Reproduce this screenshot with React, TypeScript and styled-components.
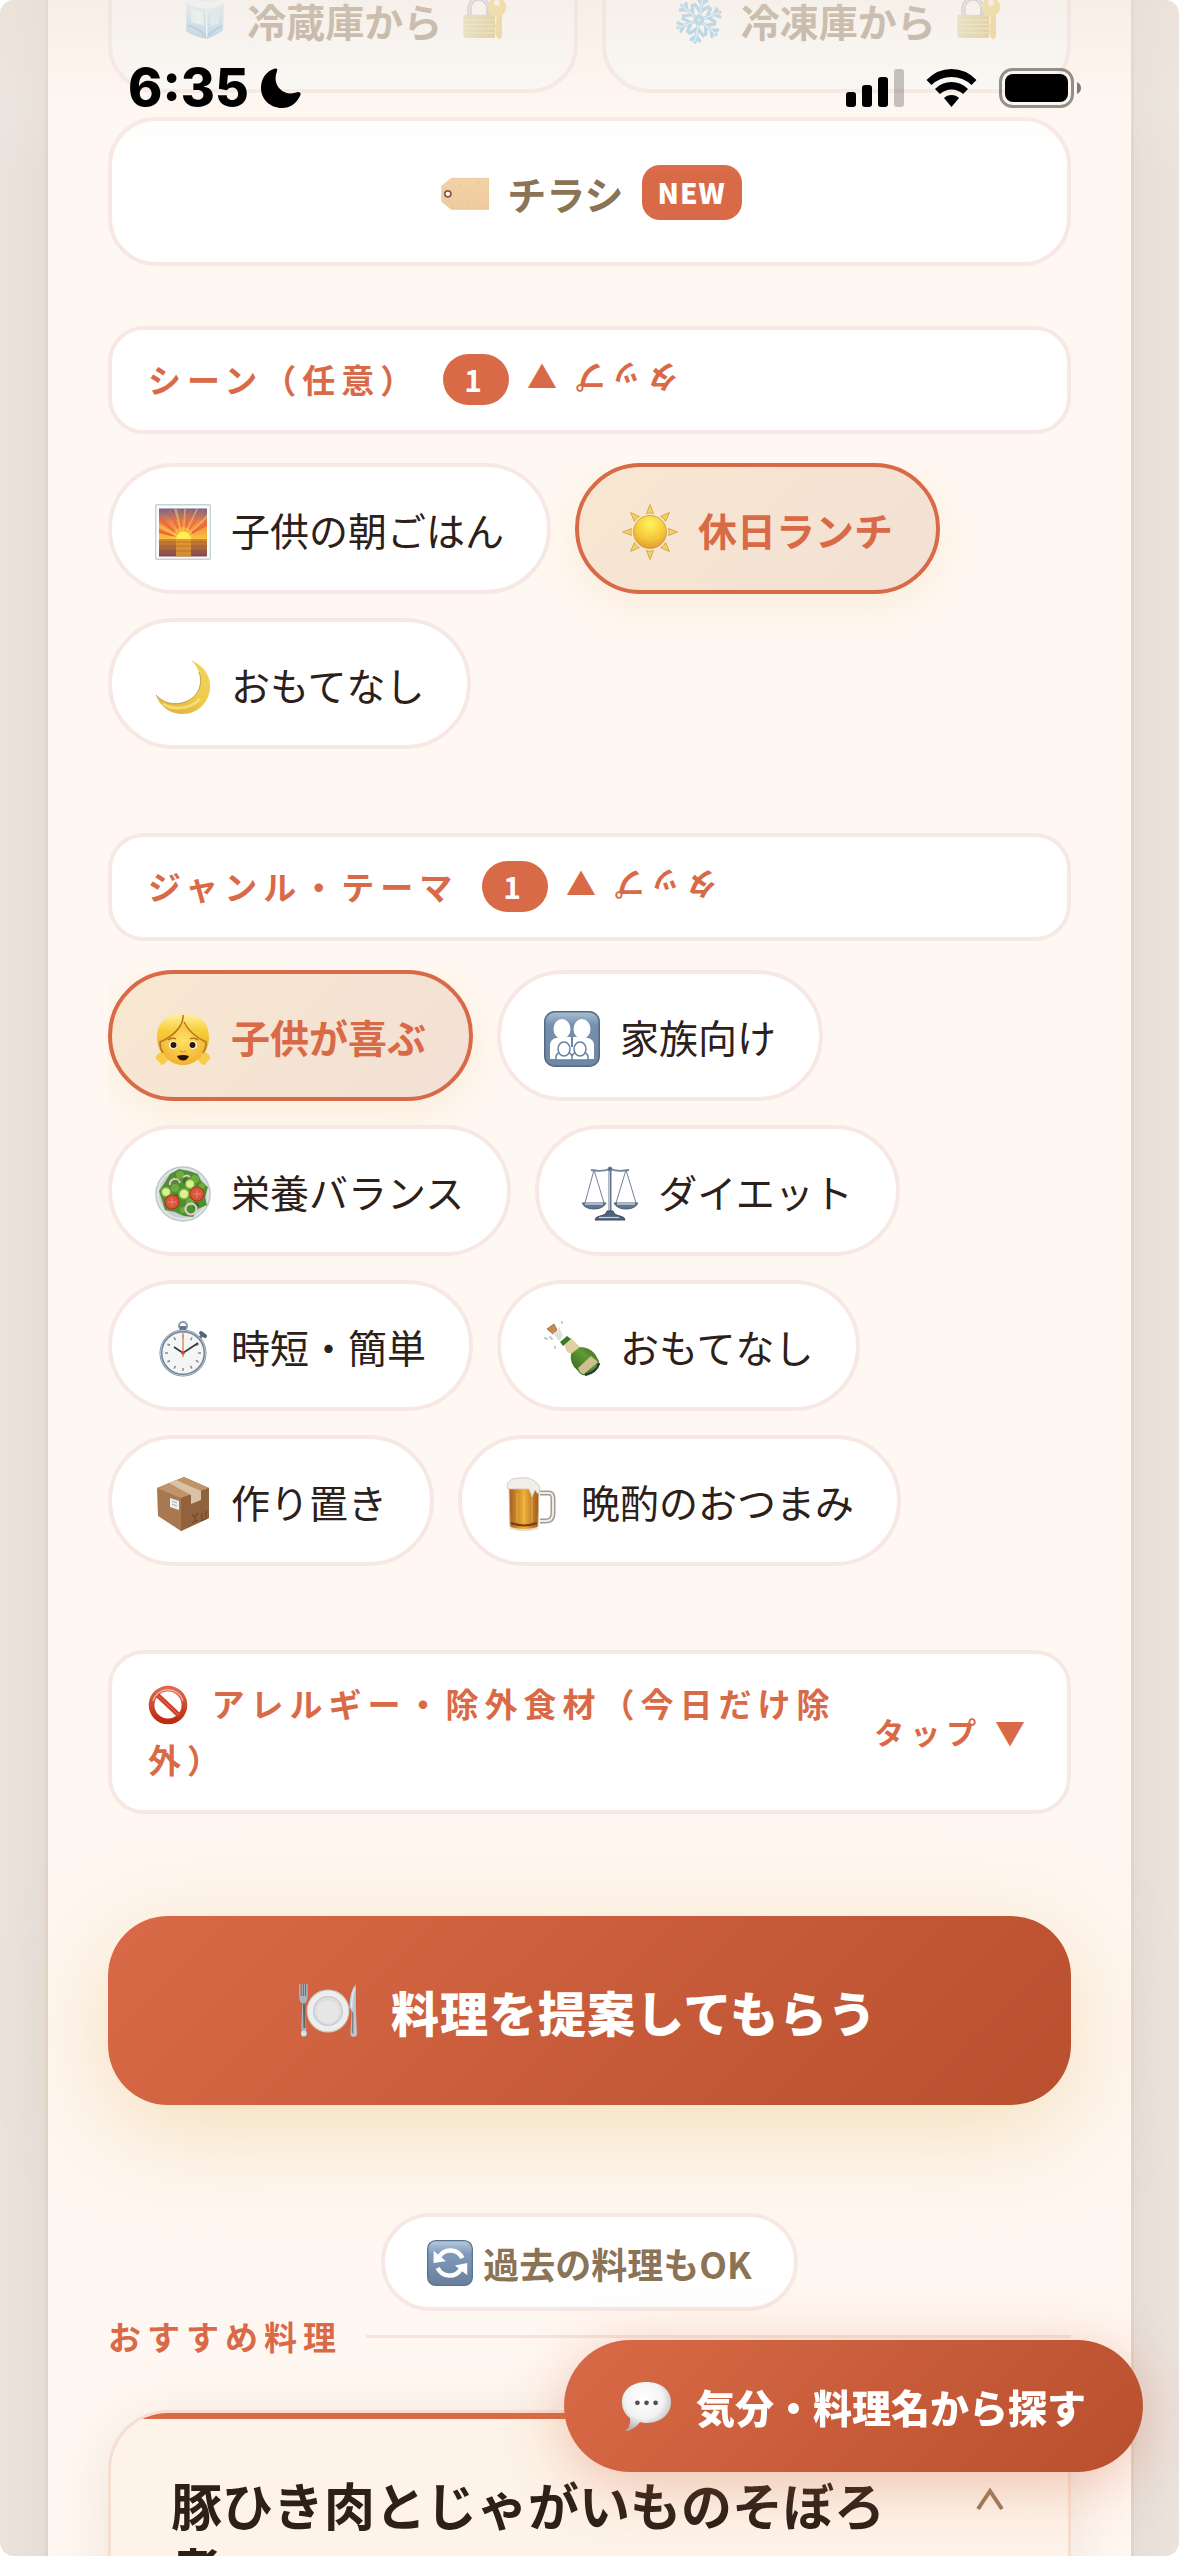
import React, { useState } from "react";
import styled, { createGlobalStyle, css } from "styled-components";

const color = {
  primary: "#d96a47",
  primaryDark: "#b84f2e",
  panel: "#fff7f1",
  line: "#f7e8e3",
  ink: "#2c2018",
  brown: "#8b7355",
};
const brand = `linear-gradient(135deg, ${color.primary} 0%, ${color.primaryDark} 100%)`;

const GlobalStyle = createGlobalStyle`
  *, *::before, *::after { box-sizing: border-box; }
  html { background: #fff; }
  body { margin: 0; font-family: "Noto Sans CJK JP", "Noto Sans", sans-serif; color: ${color.ink}; }
  button { font: inherit; color: inherit; margin: 0; padding: 0; border: 0; background: none; cursor: pointer; }
  h1, h2, h3 { margin: 0; }
`;

const Shell = styled.div`
  position: relative;
  height: 100vh;
  overflow: hidden;
  border-radius: 14px;
  background: #ebe3dd;
`;

const Panel = styled.main`
  min-height: 100%;
  margin: 0 45px;
  padding: 0 60px;
  border: solid #e4d3c7;
  border-width: 0 3px;
  background: ${color.panel};
  box-shadow: 0 0 48px rgba(139, 115, 85, 0.1);
`;

const SourceGrid = styled.div`
  display: grid;
  grid-template-columns: 1fr 1fr;
  gap: 24px;
  margin-top: -56px;
`;

const SourceCard = styled.button<{ $wide?: boolean; $locked?: boolean }>`
  display: flex;
  align-items: center;
  justify-content: center;
  gap: 18px;
  height: 149px;
  padding: 2px 0 0 4px;
  border: 4px solid ${color.line};
  border-radius: 48px;
  background: ${(p) => (p.$locked ? "#fbfaf7" : "#fff")};
  color: ${color.brown};
  font-size: 39px;
  font-weight: 700;
  ${(p) => p.$wide && css`grid-column: 1 / -1;`}
  ${(p) => p.$locked && css`
    & > * { opacity: 0.6; }
  `}
`;

const NewBadge = styled.span`
  height: 55px;
  padding: 0 16px;
  border-radius: 18px;
  background: ${color.primary};
  color: #fff;
  font-size: 28px;
  font-weight: 900;
  line-height: 55px;
  letter-spacing: 1px;
`;

const Section = styled.section<{ $gap: number }>`
  margin-top: ${(p) => p.$gap}px;
`;

const SectionHeader = styled.button`
  display: flex;
  align-items: center;
  width: 100%;
  padding: 21px 36px 23px;
  border: 4px solid ${color.line};
  border-radius: 36px;
  background: #fff;
  color: ${color.primary};
  font-size: 33px;
  font-weight: 700;
  line-height: 56px;
  letter-spacing: 6px;
  text-align: left;
`;

const Count = styled.span`
  flex: none;
  height: 51px;
  margin-left: 24px;
  padding: 0 21px;
  border-radius: 26px;
  background: ${color.primary};
  color: #fff;
  font-size: 30px;
  line-height: 51px;
`;

const Hint = styled.span<{ $open?: boolean }>`
  flex: none;
  margin-left: ${(p) => (p.$open ? "12px" : "auto")};
  font-size: 30px;
  line-height: 44px;
  white-space: nowrap;
  ${(p) => p.$open && css`transform: rotate(180deg);`}
`;

const HeaderText = styled.span`
  svg { vertical-align: -8px; margin-right: 10px; }
`;

const Chips = styled.div`
  display: flex;
  flex-wrap: wrap;
  gap: 24px;
  margin-top: 29px;
  overflow: hidden;
`;

const Chip = styled.button<{ $on: boolean }>`
  display: flex;
  align-items: center;
  gap: 20px;
  height: 131px;
  padding: 7px 43px 0;
  border: 4px solid ${(p) => (p.$on ? color.primary : color.line)};
  border-radius: 66px;
  background: ${(p) => (p.$on ? "linear-gradient(135deg, #f8e8d0, #f2e0d5)" : "#fff")};
  color: ${(p) => (p.$on ? color.primary : color.ink)};
  font-size: 39px;
  font-weight: ${(p) => (p.$on ? 700 : 400)};
  white-space: nowrap;
  ${(p) => p.$on && css`box-shadow: 0 12px 36px rgba(232, 200, 130, 0.2);`}
`;

const ChipLabel = styled.span`
  padding-bottom: 6px;
`;

const MainAction = styled.button`
  display: flex;
  align-items: center;
  justify-content: center;
  gap: 33px;
  width: 100%;
  height: 189px;
  margin-top: 102px;
  padding-right: 4px;
  border-radius: 60px;
  background: ${brand};
  box-shadow: 0 24px 96px rgba(232, 200, 130, 0.5);
  color: #fff;
  font-size: 48px;
  font-weight: 900;
  letter-spacing: 1px;
`;

const PastToggle = styled.button`
  display: flex;
  align-items: center;
  gap: 10px;
  height: 98px;
  margin: 108px auto 0;
  padding: 2px 42px 0;
  border: 4px solid ${color.line};
  border-radius: 49px;
  background: #fff;
  color: ${color.brown};
  font-size: 36px;
  font-weight: 700;
`;

const RecommendTitle = styled.h2`
  display: flex;
  align-items: center;
  gap: 24px;
  color: ${color.primary};
  font-size: 33px;
  font-weight: 700;
  line-height: 50px;
  letter-spacing: 6px;

  &::after {
    content: "";
    flex: 1;
    height: 3px;
    background: #f7e3d9;
  }
`;

const RecipeCard = styled.article`
  margin-top: 49px;
  overflow: hidden;
  border: 3px solid #f6dfd1;
  border-radius: 60px;
  background: #fdf3e8;
  box-shadow: 0 12px 60px rgba(139, 115, 85, 0.14);

  &::before {
    content: "";
    display: block;
    height: 6px;
    background: ${color.primary};
  }
`;

const RecipeHead = styled.div`
  display: flex;
  align-items: flex-start;
  gap: 30px;
  padding: 52px 45px 60px 60px;
`;

const RecipeName = styled.h3`
  flex: 1;
  font-size: 51px;
  font-weight: 700;
  line-height: 66px;
`;

const CollapseButton = styled.button`
  display: grid;
  place-items: center;
  width: 66px;
  height: 56px;
`;

const SearchFab = styled.button`
  position: fixed;
  right: 36px;
  bottom: 84px;
  display: flex;
  align-items: center;
  gap: 24px;
  height: 132px;
  padding: 0 57px;
  border-radius: 66px;
  background: ${brand};
  box-shadow: 0 12px 60px rgba(217, 106, 71, 0.36);
  color: #fff;
  font-size: 39px;
  font-weight: 900;
`;

const StatusBar = styled.header`
  position: absolute;
  inset: 0 0 auto;
  display: flex;
  align-items: center;
  height: 176px;
  padding: 0 98px 0 128px;
  background: linear-gradient(rgba(238, 226, 216, 0.42), rgba(250, 244, 238, 0.16) 60%, rgba(255, 255, 255, 0));
  color: #000;
  pointer-events: none;
`;

const Clock = styled.time`
  margin-right: 12px;
  font: 800 52px/60px Inter, "Liberation Sans", sans-serif;
`;

const StatusIcons = styled.div`
  display: flex;
  align-items: center;
  gap: 22px;
  margin-left: auto;
`;

const Picto = styled.svg`
  display: block;
  flex: none;
`;

const InlinePicto = styled.svg`
  display: inline-block;
`;

/* ---------- pictograms, all drawn on a 56 unit grid ---------- */

const art: Record<string, React.ReactNode> = {
  ice: (
    <>
      <defs>
        <linearGradient id="ice" x1="0" y1="0" x2="0" y2="1">
          <stop offset="0" stopColor="#d3edf5" /><stop offset="1" stopColor="#7fb6dc" />
        </linearGradient>
      </defs>
      <path d="M6 8Q28 1 50 8L49 40Q40 47 30 50Q16 48 6 41Z" fill="url(#ice)" />
      <path d="M7 8Q28 3 49 8Q42 15 30 15Q14 14 7 8Z" fill="#ecf9fc" />
      <path d="M12 15L26 18L27 34L12 31Z" fill="#d7f0f8" />
      <path d="M34 18L45 14L44 32L34 36Z" fill="#c2e2f2" />
      <path d="M8 34Q22 38 30 48Q38 39 48 35" fill="none" stroke="#5b9fd0" strokeWidth="2" />
      <path d="M30 15V48M20 17V32" stroke="#f4fdff" strokeWidth="1.5" />
    </>
  ),
  snow: (
    <g stroke="#6cb6e4" strokeWidth="4" strokeLinecap="round" fill="none">
      {[10, 70, 130, 190, 250, 310].map((a) => (
        <g key={a} transform={`rotate(${a} 28 28)`}>
          <path d="M28 28V2M28 18L20 11M28 18L36 11M28 9L23 4M28 9L33 4" />
          <path d="M28 28V3" stroke="#d9f2fb" strokeWidth="1.5" />
        </g>
      ))}
      <circle cx="28" cy="28" r="4" fill="#bfe4f6" />
    </g>
  ),
  lock: (
    <>
      <defs>
        <linearGradient id="lock" x1="0" y1="0" x2="1" y2="0">
          <stop offset="0" stopColor="#d8cc8c" /><stop offset="1" stopColor="#c7ab45" />
        </linearGradient>
      </defs>
      <path d="M11 26V15a11 12 0 0 1 22 0V26" fill="none" stroke="#a3abb2" strokeWidth="5" />
      <path d="M11 26V15a11 12 0 0 1 22 0" fill="none" stroke="#d9dee2" strokeWidth="1.5" />
      <rect x="4" y="22" width="37" height="27" rx="2" fill="url(#lock)" />
      <path d="M5 28H40M5 33H40M5 38H40M5 43H40" stroke="#eadfa5" strokeWidth="1" />
      <path d="M43 20H49V47L46 51L42 47V43H40V40H42V37H40V33H42Z" fill="#e5bd4b" />
      <circle cx="43" cy="13" r="11" fill="#ecc551" />
      <circle cx="43" cy="8" r="3.5" fill="#fbf6e8" />
    </>
  ),
  tag: (
    <>
      <defs>
        <linearGradient id="tag" x1="0" y1="0" x2="0" y2="1">
          <stop offset="0" stopColor="#f3d2a8" /><stop offset="1" stopColor="#eecb9c" />
        </linearGradient>
      </defs>
      <path d="M12 11H56V47H12L1 38V20Z" fill="url(#tag)" stroke="#ecc592" strokeWidth="1" />
      <circle cx="8" cy="29" r="3.6" fill="#fff" stroke="#8a5a44" strokeWidth="2" />
      <path d="M22 17v3M32 37v3M44 15v4M48 43v2M36 26v3" stroke="#e6bd8b" strokeWidth="1" />
    </>
  ),
  sunrise: (
    <>
      <defs>
        <linearGradient id="sky" x1="0" y1="0" x2="0" y2="1">
          <stop offset="0" stopColor="#6f6390" /><stop offset="0.45" stopColor="#ee8447" /><stop offset="1" stopColor="#fdc23d" />
        </linearGradient>
        <linearGradient id="rays" x1="0" y1="0" x2="0" y2="1">
          <stop offset="0" stopColor="#d9664a" stopOpacity="0.3" /><stop offset="1" stopColor="#ee5a2c" />
        </linearGradient>
        <linearGradient id="sea" x1="0" y1="0" x2="0" y2="1">
          <stop offset="0" stopColor="#d68a2c" /><stop offset="1" stopColor="#7f4650" />
        </linearGradient>
      </defs>
      <rect x="0.7" y="0.7" width="54.6" height="54.6" rx="1" fill="#fbfdfd" stroke="#c6d2d5" strokeWidth="1.4" />
      <rect x="4" y="4.5" width="48" height="31" fill="url(#sky)" />
      <path d="M28 35L4 10V17ZM28 35L11 4.5H16ZM28 35L23 4.5H26ZM28 35L33 4.5H38ZM28 35L46 4.5H51ZM28 35L52 16V22ZM28 35L4 25V29Z" fill="url(#rays)" />
      <path d="M28 35L19 5H22ZM28 35L29 5H31ZM28 35L41 5H43ZM28 35L52 11V14ZM28 35L4 20V23Z" fill="#ffc861" opacity="0.55" />
      <circle cx="28" cy="33" r="10" fill="#ffd04a" opacity="0.5" />
      <path d="M21 35a7.5 7.5 0 0 1 15 0Z" fill="#ffee4f" />
      <rect x="4" y="35" width="48" height="17.5" fill="url(#sea)" />
      <rect x="21" y="35" width="15" height="17.5" fill="#e9a22c" opacity="0.75" />
      <path d="M4 38H52M4 42H52M4 47H52" stroke="#8a4f38" strokeWidth="0.7" opacity="0.6" />
    </>
  ),
  sun: (
    <>
      <defs>
        <radialGradient id="sun" cx="0.5" cy="0.25" r="0.8">
          <stop offset="0" stopColor="#fff45e" /><stop offset="0.6" stopColor="#f3c638" /><stop offset="1" stopColor="#dc9430" />
        </radialGradient>
      </defs>
      {[0, 45, 90, 135, 180, 225, 270, 315].map((a) => (
        <path key={a} d="M28 0.5L31.5 9.5Q28 8 24.5 9.5Z" transform={`rotate(${a} 28 28)`} fill="#f3d45a" stroke="#cf9c45" strokeWidth="0.8" />
      ))}
      <circle cx="28" cy="28" r="16.5" fill="url(#sun)" stroke="#cf9438" strokeWidth="0.8" />
    </>
  ),
  moon: (
    <>
      <defs>
        <linearGradient id="moon" x1="0.8" y1="0" x2="0.4" y2="1">
          <stop offset="0" stopColor="#eed25c" /><stop offset="0.6" stopColor="#f0cb4c" /><stop offset="1" stopColor="#e3b541" />
        </linearGradient>
      </defs>
      <path d="M36 1C49 7 56 17 55 29C54 44 42 55 28 55C15 55 5 48 1 36C8 44 19 47 30 43C42 39 49 26 44 13C42 8 39 4 36 1Z" fill="url(#moon)" />
      <path d="M1 36C8 44 19 47 30 43C42 39 49 26 44 13" fill="none" stroke="#c2a04a" strokeWidth="1" />
      <path d="M8 45C18 51 34 51 45 40" fill="none" stroke="#fae98b" strokeWidth="3" opacity="0.7" />
    </>
  ),
  girl: (
    <>
      <defs>
        <radialGradient id="face" cx="0.5" cy="0.4" r="0.6">
          <stop offset="0" stopColor="#ffe264" /><stop offset="1" stopColor="#f2b02e" />
        </radialGradient>
        <linearGradient id="hair" x1="0" y1="0" x2="0" y2="1">
          <stop offset="0" stopColor="#fff0a0" /><stop offset="0.4" stopColor="#f8cf3d" /><stop offset="1" stopColor="#e9ac2a" />
        </linearGradient>
      </defs>
      <path d="M6 41Q0 44 1 48Q4 50 6 54Q12 53 14 46ZM50 41Q56 44 55 48Q52 50 50 54Q44 53 42 46Z" fill="#f8cb48" />
      <path d="M28 4C24 2 2 2 2 27Q2 36 7 42H49Q54 36 54 27C54 2 32 2 28 4Z" fill="url(#hair)" />
      <path d="M28 13C20 22 12 28 5 29C5 44 15 54 28 54C41 54 51 44 51 29C43 27 35 21 28 13Z" fill="url(#face)" />
      <path d="M28 4C29 13 20 25 5 31Q5 38 8 42M29 11C34 21 42 27 51 31Q51 38 48 42" fill="none" stroke="#b9791d" strokeWidth="1.6" />
      <ellipse cx="18" cy="34" rx="4" ry="3.8" fill="#fff" /><ellipse cx="38" cy="34" rx="4" ry="3.8" fill="#fff" />
      <circle cx="18.5" cy="34" r="3" fill="#2b1709" /><circle cx="37.500" cy="34" r="3" fill="#2b1709" />
      <path d="M13 29Q17 26 21 28M35 28Q39 26 43 29" fill="none" stroke="#a86b15" strokeWidth="1.2" />
      <path d="M22 45Q28 43 34 45Q32 49.500 28 49.500Q24 49.500 22 45Z" fill="#2d1305" />
      <path d="M25 40Q28 42 31 40" fill="none" stroke="#d7922a" strokeWidth="1.2" />
    </>
  ),
  family: (
    <>
      <defs>
        <linearGradient id="blue" x1="0" y1="0" x2="0" y2="1">
          <stop offset="0" stopColor="#a9bfd3" /><stop offset="0.25" stopColor="#7590ac" /><stop offset="1" stopColor="#6d87a4" />
        </linearGradient>
      </defs>
      <rect x="0.8" y="0.8" width="54.4" height="54.4" rx="10" fill="url(#blue)" stroke="#536b84" strokeWidth="1.6" />
      <path d="M6 48V33Q7 28 12 27L17 26H39L44 27Q49 28 50 33V48Z" fill="#fff" />
      <ellipse cx="18" cy="18" rx="8.5" ry="10" fill="#fff" /><ellipse cx="38" cy="18" rx="8.5" ry="10" fill="#fff" />
      <path d="M28 25V36" stroke="#6d87a4" strokeWidth="2" />
      <g fill="#fff" stroke="#6583a2" strokeWidth="1.5">
        <path d="M12 49V45Q13 42 17 41H23Q27 42 28 45V49ZM28 49V45Q29 42 33 41H39Q43 42 44 45V49Z" />
        <ellipse cx="20" cy="38" rx="6" ry="7" /><ellipse cx="36" cy="38" rx="6" ry="7" />
      </g>
    </>
  ),
  salad: (
    <>
      <circle cx="28" cy="28" r="27" fill="#dfe5e6" stroke="#bfc8ca" strokeWidth="1.5" />
      <circle cx="28" cy="28" r="24" fill="#c7ced0" />
      <path d="M15 8L24 3L34 5L43 8L46 15L53 21L50 31L52 39L43 43L38 51L29 50L20 46L10 44L7 34L4 25L9 18Z" fill="#4f8f31" />
      <g fill="#6dab3d">
        <circle cx="25" cy="9" r="4" /><circle cx="40" cy="13" r="4" /><circle cx="20" cy="22" r="4" /><circle cx="35" cy="36" r="4" /><circle cx="28" cy="44" r="3" /><circle cx="47" cy="20" r="3" />
      </g>
      <g fill="#3a7124">
        <circle cx="31" cy="15" r="3" /><circle cx="21" cy="30" r="2" /><circle cx="41" cy="39" r="3" /><circle cx="45" cy="25" r="2" />
      </g>
      <g fill="#dcf09a" stroke="#83b13e" strokeWidth="1.5">
        <circle cx="11" cy="26" r="4.5" /><circle cx="35" cy="18" r="4.5" /><circle cx="29" cy="28" r="5" />
      </g>
      <g fill="#d9553e" stroke="#b5371f" strokeWidth="1.2">
        <circle cx="17" cy="36" r="7" /><circle cx="42" cy="28" r="7" />
      </g>
      <path d="M17 32V40M13 36H21M42 24V32M38 28H46" stroke="#ea8a72" strokeWidth="1" />
      <path d="M15 19A5 5 0 0 1 25 17M28 11Q32 8 35 11" fill="none" stroke="#e9bfd4" strokeWidth="2" />
      <circle cx="36" cy="43" r="5.5" fill="none" stroke="#ead1d8" strokeWidth="2" />
    </>
  ),
  scale: (
    <g fill="none" stroke="#72839a">
      <path d="M9 4Q20 6 28 3Q36 6 47 4" strokeWidth="1.8" />
      <path d="M12 4L3 37M12 4L22 37M44 4L34 37M44 4L54 37" strokeWidth="1" />
      <path d="M28 2V47" stroke="#62748c" strokeWidth="3" />
      <path d="M27.5 4V46" stroke="#b9c6d4" strokeWidth="1" />
      <path d="M0 37H24Q21 43 12 43Q3 43 0 37ZM32 37H56Q53 43 44 43Q35 43 32 37Z" fill="#5f7590" stroke="#4d6078" />
      <path d="M3 38H21M35 38H53" stroke="#c6d2de" strokeWidth="1.5" />
      <path d="M25 45H31Q32 49 38 50Q43 51 43 54H13Q13 51 18 50Q24 49 25 45Z" fill="#52647a" stroke="#394a60" />
      <path d="M17 51.5H37" stroke="#c6d2de" strokeWidth="1.2" />
      <circle cx="28" cy="3" r="2" fill="#52647a" />
    </g>
  ),
  watch: (
    <>
      <circle cx="28" cy="5" r="4" fill="none" stroke="#8b9aab" strokeWidth="2" />
      <rect x="25" y="5" width="6" height="6" fill="#66778a" />
      <path d="M44 18L48 13" stroke="#66778a" strokeWidth="3" /><path d="M46 12L50 15" stroke="#52637a" strokeWidth="4" strokeLinecap="round" />
      <circle cx="28" cy="32" r="22" fill="#f4f5f5" stroke="#76869a" strokeWidth="3" />
      <circle cx="28" cy="32" r="22.5" fill="none" stroke="#b8c8dc" strokeWidth="1" />
      {[0, 30, 60, 90, 120, 150, 180, 210, 240, 270, 300, 330].map((a) => (
        <path key={a} d="M28 14V17" transform={`rotate(${a} 28 32)`} stroke="#878b8d" strokeWidth="1.5" />
      ))}
      <path d="M19 26L28 32L43 22" fill="none" stroke="#33373b" strokeWidth="1.6" />
      <path d="M28 12V36" stroke="#e68a64" strokeWidth="1.5" />
      <circle cx="28" cy="32" r="1.8" fill="#c34e2a" />
    </>
  ),
  champagne: (
    <>
      <defs>
        <linearGradient id="glass" x1="0" y1="1" x2="1" y2="0">
          <stop offset="0" stopColor="#2c5c1c" /><stop offset="0.6" stopColor="#5f9a35" /><stop offset="1" stopColor="#31601f" />
        </linearGradient>
      </defs>
      <path d="M3 8L10 3L13 9L9 13Z" fill="#c98a4f" stroke="#9c6434" strokeWidth="0.8" />
      <path d="M9 12L14 10L15 5L17 11L19 15L15 20L12 16Z" fill="#dfe2da" />
      <path d="M1 17L3 18M11 26L11 27M6 16L8 18M18 1L18 2" stroke="#c5cab8" strokeWidth="2" strokeLinecap="round" />
      <path d="M20 23L27 17L37 27L30 34L23 31Z" fill="#e0d0a2" />
      <path d="M16 21L23 15L27 18L19 25Z" fill="#3d7a25" />
      <path d="M27 33L36 26Q45 26 51 33L55 40Q55 50 42 54Q37 55 34 50Q25 42 27 33Z" fill="url(#glass)" />
      <path d="M34 47L47 35L54 41L40 53Q36 53 34 47Z" fill="#cfbf90" />
      <path d="M41 54Q53 51 55 42" stroke="#2c3f33" strokeWidth="2.5" fill="none" />
    </>
  ),
  box: (
    <>
      <path d="M2 12L29 1L54 12L54 42L26 55L3 40Z" fill="#a87850" />
      <path d="M2 12L29 1L54 12L26 22Z" fill="#c0946a" />
      <path d="M26 22L54 12V42L26 55Z" fill="#90623d" />
      <path d="M14 7L21 4L46 15V24L36 28V19Z" fill="#d9c2a6" />
      <path d="M15 22L24 25V34L15 31Z" fill="#eef0f1" />
      <path d="M17 25L22 27M17 28L22 30" stroke="#a2a7aa" strokeWidth="1" />
      <path d="M37 39Q41 42 43 37M40 41V46M37 47L43 44M47 37V43M51 35V41M46 45L52 42" fill="none" stroke="#6e4a2d" strokeWidth="1.3" />
    </>
  ),
  beer: (
    <>
      <defs>
        <linearGradient id="beer" x1="0" y1="0" x2="1" y2="0">
          <stop offset="0" stopColor="#a85c1c" /><stop offset="0.5" stopColor="#eeb03a" /><stop offset="1" stopColor="#a1561c" />
        </linearGradient>
      </defs>
      <path d="M35 17H44Q48 17 48 23V37Q48 45 41 45H35" fill="none" stroke="#a39c90" strokeWidth="5" />
      <path d="M35 17H44Q48 17 48 23V37Q48 45 41 45H35" fill="none" stroke="#eeece6" strokeWidth="2" />
      <path d="M4 11H34L33 50Q32 54 19 54Q6 54 5 50Z" fill="url(#beer)" stroke="#c9b99a" strokeWidth="1" />
      <path d="M12 17V46M19 20V46M27 18V46" stroke="#ffd75b" strokeWidth="1.5" opacity="0.35" />
      <path d="M6 47Q19 52 32 47" fill="none" stroke="#7b3c10" strokeWidth="2" />
      <path d="M5 52Q19 56 33 52" fill="none" stroke="#e8ddcb" strokeWidth="2" />
      <path d="M2 10Q3 2 14 2Q24 0 32 7Q37 12 33 18L30 14L27 21L24 13H4Q2 13 2 10Z" fill="#f1ede7" stroke="#cfc8bb" strokeWidth="0.8" />
    </>
  ),
  ban: (
    <>
      <defs>
        <linearGradient id="ban" x1="0" y1="0" x2="0" y2="1">
          <stop offset="0" stopColor="#dc6a50" /><stop offset="1" stopColor="#bd2a10" />
        </linearGradient>
      </defs>
      <circle cx="28" cy="28" r="23" fill="none" stroke="url(#ban)" strokeWidth="8" />
      <path d="M12 13L44 43" stroke="#cc4229" strokeWidth="7" />
      <path d="M7 22A22 22 0 0 1 49 22" fill="none" stroke="#f5b5a4" strokeWidth="2" />
      <path d="M13 14L43 42" stroke="#e88d78" strokeWidth="1" />
    </>
  ),
  plate: (
    <>
      <circle cx="28" cy="28" r="19.5" fill="#eeeeed" stroke="#cfcdca" strokeWidth="1" />
      <circle cx="28" cy="28" r="13.5" fill="#dcdddd" stroke="#c4c8cc" strokeWidth="1" />
      <circle cx="28" cy="29" r="10.5" fill="#e6e6e5" />
      <path d="M14.5 29A13.5 13.5 0 0 0 27 41" fill="none" stroke="#c1d2e6" strokeWidth="1.5" />
      <path d="M1 3V14Q1 19 4 21L3 49Q3 52 5 52Q8 52 8 49L6 21Q9 19 9 14V3" fill="#a9b6c1" />
      <path d="M3 3V14M5 3V14M7 3V14" stroke="#9a5b42" strokeWidth="1" />
      <path d="M5.5 21L6 44" stroke="#6b625d" strokeWidth="1.8" /><circle cx="5.5" cy="49" r="2.5" fill="#d5e4f1" />
      <path d="M54 3Q48 9 48 25L50 28L49 49Q49 52 52 52Q55 52 55 49L54 28Z" fill="#b9c8d4" />
      <path d="M51 29V49" stroke="#7e8086" strokeWidth="1.5" />
      <path d="M53 7Q50 13 50 25" stroke="#e2ebf2" strokeWidth="1.5" fill="none" />
    </>
  ),
  refresh: (
    <>
      <defs>
        <linearGradient id="rblue" x1="0" y1="0" x2="0" y2="1">
          <stop offset="0" stopColor="#b6cadc" /><stop offset="0.3" stopColor="#7e9abb" /><stop offset="1" stopColor="#687f9a" />
        </linearGradient>
      </defs>
      <rect x="0.8" y="0.8" width="54.4" height="54.4" rx="10" fill="url(#rblue)" stroke="#5b7290" strokeWidth="1.6" />
      <path d="M43 22A16 16 0 0 0 15 20M13 34A16 16 0 0 0 41 36" fill="none" stroke="#fff" strokeWidth="5.5" />
      <path d="M8 28V13L23 26ZM49 28V43L34 31Z" fill="#fff" />
    </>
  ),
  speech: (
    <>
      <defs>
        <radialGradient id="speech" cx="0.45" cy="0.35" r="0.65">
          <stop offset="0" stopColor="#fff" /><stop offset="0.6" stopColor="#f3f3f3" /><stop offset="1" stopColor="#b5b5b5" />
        </radialGradient>
      </defs>
      <path d="M28 1C44 1 55 10 55 23C55 36 44 46 28 46Q24 46 21 45Q14 54 5 55Q11 50 10 41Q1 34 1 23C1 10 12 1 28 1Z" fill="url(#speech)" />
      <circle cx="18" cy="24" r="2.6" fill="#505050" /><circle cx="28" cy="24" r="2.6" fill="#505050" /><circle cx="38" cy="24" r="2.6" fill="#505050" />
    </>
  ),
};

const Emoji = ({ name, size = 56 }: { name: string; size?: number }) => (
  <Picto width={size} height={size} viewBox="0 0 56 56" aria-hidden="true">{art[name]}</Picto>
);

type Option = { id: string; icon: string; label: string };

const scenes: Option[] = [
  { id: "breakfast", icon: "sunrise", label: "子供の朝ごはん" },
  { id: "lunch", icon: "sun", label: "休日ランチ" },
  { id: "guests", icon: "moon", label: "おもてなし" },
];

const genres: Option[] = [
  { id: "kids", icon: "girl", label: "子供が喜ぶ" },
  { id: "family", icon: "family", label: "家族向け" },
  { id: "balance", icon: "salad", label: "栄養バランス" },
  { id: "diet", icon: "scale", label: "ダイエット" },
  { id: "quick", icon: "watch", label: "時短・簡単" },
  { id: "party", icon: "champagne", label: "おもてなし" },
  { id: "prep", icon: "box", label: "作り置き" },
  { id: "snacks", icon: "beer", label: "晩酌のおつまみ" },
];

function ChoiceSection({ title, options, initial, gap }: { title: string; options: Option[]; initial: string; gap: number }) {
  const [picked, setPicked] = useState<string[]>([initial]);
  const toggle = (id: string) =>
    setPicked((now) => (now.includes(id) ? now.filter((x) => x !== id) : [...now, id]));
  return (
    <Section $gap={gap}>
      <SectionHeader aria-expanded="true">
        <HeaderText>{title}</HeaderText>
        {picked.length > 0 && <Count>{picked.length}</Count>}
        <Hint $open>タップ ▼</Hint>
      </SectionHeader>
      <Chips>
        {options.map((o) => (
          <Chip key={o.id} $on={picked.includes(o.id)} aria-pressed={picked.includes(o.id)} onClick={() => toggle(o.id)}>
            <Emoji name={o.icon} />
            <ChipLabel>{o.label}</ChipLabel>
          </Chip>
        ))}
      </Chips>
    </Section>
  );
}

export default function App() {
  return (
    <>
      <GlobalStyle />
      <Shell>
        <Panel>
          <SourceGrid>
            <SourceCard $locked>
              <Emoji name="ice" size={48} />
              <span>冷蔵庫から</span>
              <Emoji name="lock" size={48} />
            </SourceCard>
            <SourceCard $locked>
              <Emoji name="snow" size={48} />
              <span>冷凍庫から</span>
              <Emoji name="lock" size={48} />
            </SourceCard>
            <SourceCard $wide>
              <Emoji name="tag" size={48} />
              <span>チラシ</span>
              <NewBadge>NEW</NewBadge>
            </SourceCard>
          </SourceGrid>

          <ChoiceSection title="シーン（任意）" options={scenes} initial="lunch" gap={60} />
          <ChoiceSection title="ジャンル・テーマ" options={genres} initial="kids" gap={84} />

          <Section $gap={84}>
            <SectionHeader aria-expanded="false">
              <HeaderText>
                <InlinePicto width="40" height="40" viewBox="0 0 56 56" aria-hidden="true">{art.ban}</InlinePicto>
                {" "}アレルギー・除外食材（今日だけ除外）
              </HeaderText>
              <Hint>タップ ▼</Hint>
            </SectionHeader>
          </Section>

          <MainAction>
            <Emoji name="plate" size={60} />
            <span>料理を提案してもらう</span>
          </MainAction>

          <PastToggle>
            <Emoji name="refresh" size={46} />
            <span>過去の料理もOK</span>
          </PastToggle>

          <RecommendTitle>おすすめ料理</RecommendTitle>
          <RecipeCard>
            <RecipeHead>
              <RecipeName>豚ひき肉とじゃがいものそぼろ煮</RecipeName>
              <CollapseButton aria-label="閉じる">
                <Picto width="30" height="24" viewBox="0 0 30 24" fill="none" stroke="#9a7b5b" strokeWidth="4" aria-hidden="true">
                  <path d="M3 22L15 4L27 22" />
                </Picto>
              </CollapseButton>
            </RecipeHead>
          </RecipeCard>
        </Panel>

        <StatusBar>
          <Clock>6:35</Clock>
          <Picto width="40" height="40" viewBox="0 0 40 40" aria-hidden="true">
            <path d="M14 0.5Q17 0 16 3Q12 14 19 21Q26 28 37 24Q41 24 39 28C35 36 29 40 21 40C9 40 0 31 0 20C0 11 5 3 14 0.5Z" />
          </Picto>
          <StatusIcons>
            <Picto width="58" height="38" viewBox="0 0 58 38" aria-hidden="true">
              <rect x="0" y="23" width="10" height="15" rx="3" />
              <rect x="16" y="16" width="10" height="22" rx="3" />
              <rect x="32" y="8" width="10" height="30" rx="3" />
              <rect x="48" y="0" width="10" height="38" rx="3" opacity="0.22" />
            </Picto>
            <Picto width="51" height="38" viewBox="0 0 51 38" aria-hidden="true">
              <path d="M0.5 11Q11 0 25.5 0Q40 0 50.5 11L45.5 16Q37 8 25.5 8Q14 8 5.5 16Z" />
              <path d="M9 20Q16 13 25.5 13Q35 13 42 20L37 25Q32 20.5 25.5 20.5Q19 20.5 14 25Z" />
              <path d="M18 29Q21 26 25.5 26Q30 26 33 29L25.5 38Z" />
            </Picto>
            <Picto width="82" height="40" viewBox="0 0 82 40" aria-hidden="true">
              <rect x="1.5" y="1.5" width="72" height="37" rx="12" fill="none" stroke="#000" strokeOpacity="0.42" strokeWidth="3" />
              <rect x="6" y="6" width="63" height="28" rx="8" />
              <path d="M78 14Q82 16 82 20Q82 24 78 26Z" opacity="0.5" />
            </Picto>
          </StatusIcons>
        </StatusBar>

        <SearchFab>
          <Emoji name="speech" size={51} />
          <span>気分・料理名から探す</span>
        </SearchFab>
      </Shell>
    </>
  );
}
